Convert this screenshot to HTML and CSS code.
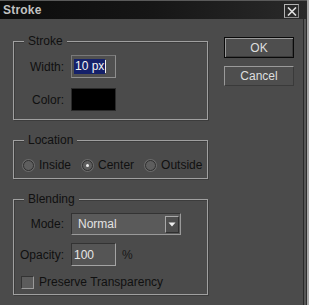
FILE: index.html
```html
<!DOCTYPE html>
<html>
<head>
<meta charset="utf-8">
<link rel="stylesheet" href="styles.css">
</head>
<body>
<div class="dialog">
  <div class="titlebar">
    <span class="title">Stroke</span>
    <span class="close">
      <svg width="10" height="9" viewBox="0 0 10 9"><path d="M1 0.5 L9 8.5 M9 0.5 L1 8.5" stroke="#e0e0e0" stroke-width="1.6"/></svg>
    </span>
  </div>
  <div class="content">
    <div class="left">
      <div class="group stroke-group">
        <span class="legend">Stroke</span>
        <div class="form">
          <span class="label">Width:</span>
          <span class="field width-field"><span class="sel">10 px</span><span class="caret"></span></span>
          <span class="label">Color:</span>
          <span class="swatch"></span>
        </div>
      </div>
      <div class="group location-group">
        <span class="legend">Location</span>
        <div class="radios">
          <span class="radio-item"><span class="radio"></span>Inside</span>
          <span class="radio-item"><span class="radio on"></span>Center</span>
          <span class="radio-item"><span class="radio"></span>Outside</span>
        </div>
      </div>
      <div class="group blending-group">
        <span class="legend">Blending</span>
        <div class="form blend-form">
          <span class="label">Mode:</span>
          <span class="select"><span class="select-text">Normal</span><span class="arrow"><svg width="8" height="5" viewBox="0 0 8 5"><path d="M0.5 0.5 L7.5 0.5 L4 4.5 Z" fill="#eee"/></svg></span></span>
          <span class="label">Opacity:</span>
          <span class="opacity-row"><span class="field sunken">100</span><span class="pct">%</span></span>
        </div>
        <div class="check-row"><span class="checkbox"></span>Preserve Transparency</div>
      </div>
    </div>
    <div class="right">
      <div class="btn ok">OK</div>
      <div class="btn">Cancel</div>
    </div>
  </div>
</div>
</body>
</html>
```
FILE: styles.css
```css
html, body {
  margin: 0;
  padding: 0;
  background: #4b4b4b;
}
.dialog {
  width: 309px;
  height: 305px;
  box-sizing: border-box;
  background: #4b4b4b;
  font-family: "Liberation Sans", Arial, sans-serif;
  font-size: 12px;
  color: #101010;
  border-right: 2px solid #a8a8a8;
  box-shadow: inset -1px 0 0 #2c2c2c, inset -3px 0 0 #565656, inset -4px 0 0 #2a2a2a;
  overflow: hidden;
}
.titlebar {
  height: 19px;
  box-sizing: border-box;
  background: linear-gradient(to right, #0c0c0c 0%, #161616 50%, #2a2a2a 100%);
  border-top: 1px solid #5a5a5a;
  display: flex;
  align-items: center;
  justify-content: space-between;
  padding: 0 8px 0 3px;
}
.title {
  font-weight: bold;
  color: #c2c2c2;
  font-size: 12px;
  letter-spacing: 0.2px;
}
.close {
  width: 13px;
  height: 12px;
  border: 1px solid #b4b4b4;
  border-right-color: #8a8a8a;
  border-bottom-color: #8a8a8a;
  display: flex;
  align-items: center;
  justify-content: center;
  background: #2a2a2a;
  margin-top: 2px;
}
.content {
  display: flex;
  padding: 22px 0 0 13px;
  gap: 16px;
}
.left {
  width: 195px;
  display: flex;
  flex-direction: column;
  gap: 20px;
}
.group {
  position: relative;
  border: 1px solid #a0a0a0;
  box-shadow: 1px 1px 0 #3c3c3c, inset 1px 1px 0 #3c3c3c;
}
.legend {
  position: absolute;
  top: -8px;
  left: 10px;
  padding: 0 4px;
  background: #4b4b4b;
  line-height: 14px;
}
.form {
  display: grid;
  grid-template-columns: 50px auto;
  column-gap: 7px;
  row-gap: 10px;
  align-items: center;
}
.label {
  text-align: right;
}
.stroke-group {
  padding: 13px 0 0 0;
  box-sizing: border-box;
  height: 79px;
}
.field {
  width: 45px;
  height: 23px;
  box-sizing: border-box;
  border: 1px solid #8e8e8e;
  border-top-color: #7a7a7a;
  border-left-color: #7a7a7a;
  background: #505050;
  display: flex;
  align-items: center;
  padding-left: 2px;
  color: #e6e6e6;
}
.sel {
  background: #15216a;
  color: #f4f4f4;
  line-height: 15px;
  padding: 0 1px;
}
.caret {
  width: 1px;
  height: 13px;
  background: #f0f0f0;
}
.swatch {
  width: 45px;
  height: 23px;
  background: #000;
  border: 1px solid #2a2a2a;
  box-sizing: border-box;
}
.location-group {
  height: 39px;
  box-sizing: border-box;
  padding: 17px 0 0 9px;
}
.radios {
  display: flex;
  align-items: center;
  line-height: 14px;
}
.radio-item {
  display: flex;
  align-items: center;
  margin-right: 11px;
}
.radio {
  width: 11px;
  height: 11px;
  box-sizing: border-box;
  border-radius: 50%;
  background: #5e5e5e;
  border: 1px solid #2f2f2f;
  box-shadow: 0 0 0 1px #6a6a6a;
  margin-right: 5px;
  position: relative;
}
.radio.on::after {
  content: "";
  position: absolute;
  left: 3px;
  top: 3px;
  width: 3px;
  height: 3px;
  border-radius: 50%;
  background: #f0f0f0;
}
.blending-group {
  height: 96px;
  box-sizing: border-box;
  padding: 13px 0 0 0;
}
.blend-form {
  row-gap: 8px;
}
.select {
  width: 110px;
  height: 22px;
  box-sizing: border-box;
  border: 1px solid #333;
  border-right-color: #9a9a9a;
  border-bottom-color: #9a9a9a;
  background: #5a5a5a;
  display: flex;
  align-items: center;
  justify-content: space-between;
  padding: 0 1px 0 6px;
  color: #e2e2e2;
}
.arrow {
  width: 14px;
  height: 17px;
  box-sizing: border-box;
  border: 1px solid #a8a8a8;
  border-right-color: #303030;
  border-bottom-color: #303030;
  background: #4e4e4e;
  display: flex;
  align-items: center;
  justify-content: center;
}
.opacity-row {
  display: flex;
  align-items: center;
  gap: 6px;
}
.sunken {
  border: 1px solid #333;
  border-right-color: #a4a4a4;
  border-bottom-color: #a4a4a4;
  background: #555;
  height: 23px;
}
.pct {
  color: #181818;
}
.check-row {
  display: flex;
  align-items: center;
  padding: 9px 0 0 7px;
  line-height: 14px;
}
.checkbox {
  width: 13px;
  height: 13px;
  box-sizing: border-box;
  background: #5c5c5c;
  border: 1px solid #333;
  border-right-color: #9a9a9a;
  border-bottom-color: #9a9a9a;
  margin-right: 5px;
}
.right {
  display: flex;
  flex-direction: column;
  gap: 8px;
  margin-top: -4px;
}
.btn {
  width: 70px;
  height: 20px;
  box-sizing: border-box;
  border: 1px solid #9a9a9a;
  border-right-color: #3a3a3a;
  border-bottom-color: #3a3a3a;
  display: flex;
  align-items: center;
  justify-content: center;
  color: #dedede;
  background: #4e4e4e;
}
.btn.ok {
  border: 1px solid #0a0a0a;
  box-shadow: inset 1px 1px 0 #9a9a9a, inset -1px -1px 0 #3a3a3a;
  height: 21px;
}
```
